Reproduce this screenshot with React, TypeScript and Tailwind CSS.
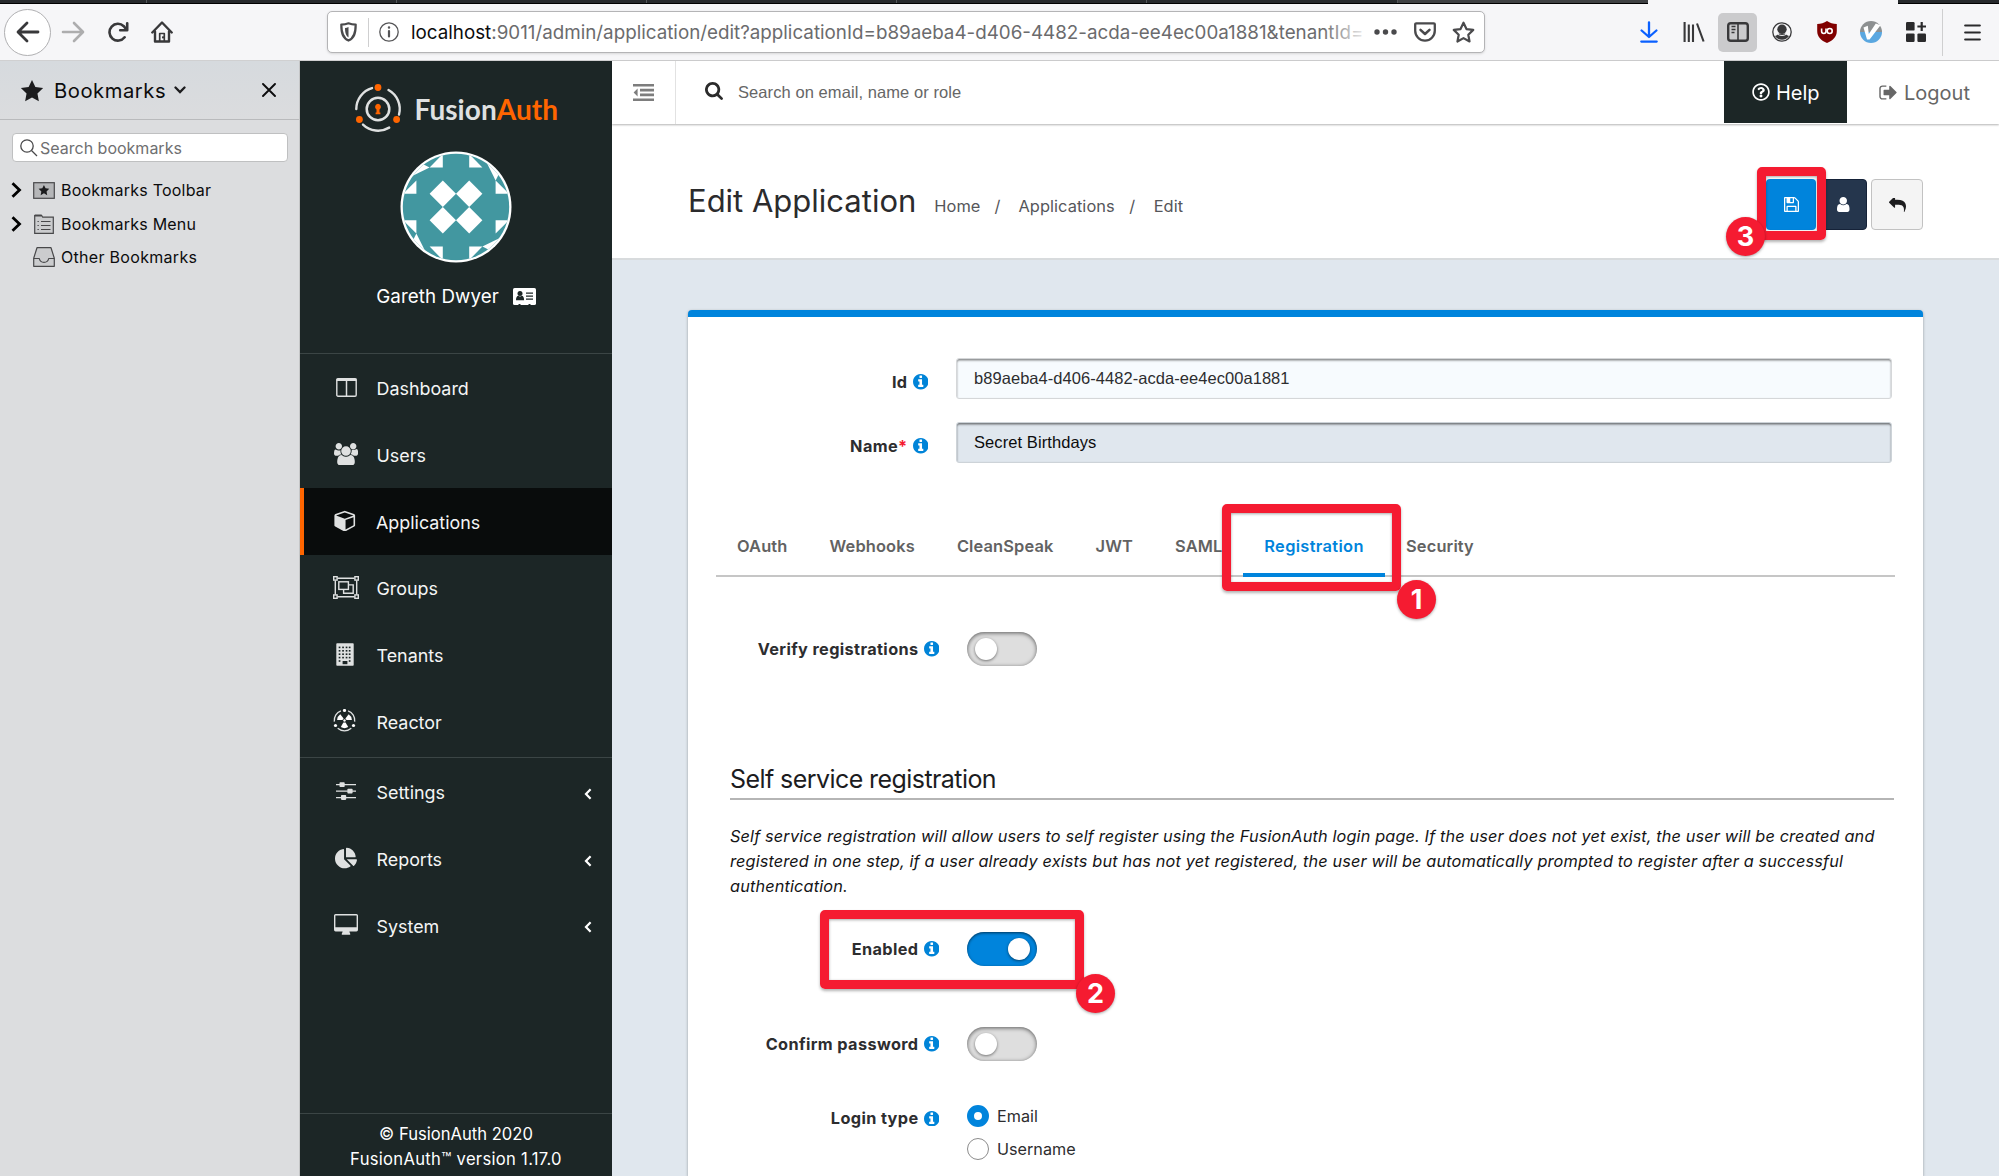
import type { ReactNode } from "react";
import { FaChartPie, FaRegQuestionCircle } from "react-icons/fa";

/* ---------- icons ---------- */

function Glyph({ box, d, className }: { box: string; d: string; className: string }) {
  return (
    <svg viewBox={box} className={className} fill="currentColor">
      <path d={d} />
    </svg>
  );
}

const INFO =
  "M1152 1376v-160q0-14-9-23t-23-9h-96v-512q0-14-9-23t-23-9h-320q-14 0-23 9t-9 23v160q0 14 9 23t23 9h96v320h-96q-14 0-23 9t-9 23v160q0 14 9 23t23 9h448q14 0 23-9t9-23zm-128-896v-160q0-14-9-23t-23-9h-192q-14 0-23 9t-9 23v160q0 14 9 23t23 9h192q14 0 23-9t9-23zm640 416q0 209-103 385.5t-279.5 279.5-385.5 103-385.5-103-279.5-279.5-103-385.5 103-385.5 279.5-279.5 385.5-103 385.5 103 279.5 279.5 103 385.5z";
const SEARCH =
  "M1216 832q0-185-131.5-316.5t-316.5-131.5-316.5 131.5-131.5 316.5 131.5 316.5 316.5 131.5 316.5-131.5 131.5-316.5zm512 832q0 52-38 90t-90 38q-54 0-90-38l-343-342q-179 124-399 124-143 0-273.5-55.5t-225-150-150-225-55.5-273.5 55.5-273.5 150-225 225-150 273.5-55.5 273.5 55.5 225 150 150 225 55.5 273.5q0 220-124 399l343 343q37 37 37 90z";
const SAVE =
  "M512 1536h768v-384h-768v384zm896 0h128v-896q0-14-10-38.5t-20-34.5l-281-281q-10-10-34-20t-39-10v416q0 40-28 68t-68 28h-576q-40 0-68-28t-28-68v-416h-128v1280h128v-416q0-40 28-68t68-28h832q40 0 68 28t28 68v416zm-384-928v-320q0-13-9.5-22.5t-22.5-9.5h-192q-13 0-22.5 9.5t-9.5 22.5v320q0 13 9.5 22.5t22.5 9.5h192q13 0 22.5-9.5t9.5-22.5zm640 32v928q0 40-28 68t-68 28h-1344q-40 0-68-28t-28-68v-1344q0-40 28-68t68-28h928q40 0 88 20t76 48l280 280q28 28 48 76t20 88z";
const USER =
  "M1280 1399q0 109-62.5 187t-150.5 78h-854q-88 0-150.5-78t-62.5-187q0-85 8.5-160.5t31.5-152 58.5-131 94-89 134.5-34.5q131 128 313 128t313-128q76 0 134.5 34.5t94 89 58.5 131 31.5 152 8.5 160.5zm-256-887q0 159-112.5 271.5t-271.5 112.5-271.5-112.5-112.5-271.5 112.5-271.5 271.5-112.5 271.5 112.5 112.5 271.5z";
const REPLY =
  "M1792 1120q0 166-127 451-3 7-10.5 24t-13.5 30-13 22q-12 17-28 17-15 0-23.5-10t-8.5-25q0-9 2.5-26.5t2.5-23.5q5-68 5-123 0-101-17.5-181t-48.5-138.5-80-101-105.5-69.5-133-42.5-154-21.5-175.5-6h-224v256q0 26-19 45t-45 19-45-19l-512-512q-19-19-19-45t19-45l512-512q19-19 45-19t45 19 19 45v256h224q713 0 875 403 53 134 53 333z";
const SIGN_OUT =
  "M640 1440q0 4 1 20t.5 26.5-3 23.5-10 19.5-20.5 6.5h-320q-119 0-203.5-84.5t-84.5-203.5v-704q0-119 84.5-203.5t203.5-84.5h320q13 0 22.5 9.5t9.5 22.5q0 4 1 20t.5 26.5-3 23.5-10 19.5-20.5 6.5h-320q-66 0-113 47t-47 113v704q0 66 47 113t113 47h312l11.5 1 11.5 3 8 5.5 7 9 2 13.5zm928-544q0 26-19 45l-544 544q-19 19-45 19t-45-19-19-45v-288h-448q-26 0-45-19t-19-45v-384q0-26 19-45t45-19h448v-288q0-26 19-45t45-19 45 19l544 544q19 19 19 45z";
const USERS =
  "M593 896q-162 5-265 128h-134q-82 0-138-40.5t-56-118.5q0-353 124-353 6 0 43.5 21t97.5 42.5 119 21.5q67 0 133-23-5 37-5 66 0 159 93 292zm1071 637q0 120-73 189.5t-194 69.5h-874q-121 0-194-69.5t-73-189.5q0-53 3.5-103.5t14-109 26.5-108.5 43-97.5 62-81 85.5-53.5 111.5-20q10 0 43 21.5t73 48 107 48 135 21.5 135-21.5 107-48 73-48 43-21.5q61 0 111.5 20t85.5 53.5 62 81 43 97.5 26.5 108.5 14 109 3.5 103.5zm-1024-1277q0 106-75 181t-181 75-181-75-75-181 75-181 181-75 181 75 75 181zm704 384q0 159-112.5 271.5t-271.5 112.5-271.5-112.5-112.5-271.5 112.5-271.5 271.5-112.5 271.5 112.5 112.5 271.5zm576 225q0 78-56 118.5t-138 40.5h-134q-103-123-265-128 93-133 93-292 0-29-5-66 66 23 133 23 59 0 119-21.5t97.5-42.5 43.5-21q124 0 124 353zm-128-609q0 106-75 181t-181 75-181-75-75-181 75-181 181-75 181 75 75 181z";
const CUBE =
  "M896 1629l640-349v-636l-640 233v752zm-64-865l698-254-698-254-698 254 698 254zm832-252v768q0 35-18 65t-49 47l-704 384q-28 16-61 16t-61-16l-704-384q-31-17-49-47t-18-65v-768q0-40 23-73t61-47l704-256q22-8 44-8t44 8l704 256q38 14 61 47t23 73z";

const STAR = "M12 1.8l3.1 6.6 7.1.9-5.2 5 1.3 7.1L12 17.9l-6.3 3.5L7 14.3l-5.2-5 7.1-.9z";

function ColumnsIcon() {
  return (
    <svg viewBox="0 0 21 19" className="h-[19px] w-[21px]" fill="none" stroke="currentColor">
      <rect x="0.8" y="0.8" width="19.4" height="17.4" rx="1.2" strokeWidth="1.4" />
      <path d="M0.5 1.8h20" strokeWidth="2.4" />
      <path d="M10.5 2v16" strokeWidth="1.5" />
    </svg>
  );
}

function GroupIcon() {
  return (
    <svg viewBox="0 0 26 23" className="h-[23px] w-[26px]" fill="none" stroke="currentColor" strokeWidth="1.4">
      <path d="M4.5 2.3h17M4.5 20.7h17M2.3 4.5v14M23.7 4.5v14" />
      <rect x="0.7" y="0.7" width="3.4" height="3.4" />
      <rect x="21.9" y="0.7" width="3.4" height="3.4" />
      <rect x="0.7" y="18.9" width="3.4" height="3.4" />
      <rect x="21.9" y="18.9" width="3.4" height="3.4" />
      <rect x="5.8" y="5.8" width="9.6" height="7.6" />
      <path d="M15.6 8.9h4.6v8.3H10.6v-3.6" />
    </svg>
  );
}

function BuildingIcon() {
  const rows = [3.6, 7, 10.4, 13.8, 17.2];
  const cols = [3.4, 6.9, 10.4, 13.5];
  return (
    <svg viewBox="0 0 18 23" className="mr-[2px] h-[23px] w-[18px]">
      <rect x="0.3" y="0.2" width="17.4" height="22.6" rx="0.8" fill="currentColor" />
      {rows.map((y, r) =>
        cols.map((x, c) =>
          r === 4 && (c === 1 || c === 2) ? null : (
            <rect key={`${x}-${y}`} x={x - 0.7} y={y} width="1.7" height="1.6" fill="#1c2626" />
          ),
        ),
      )}
      <rect x="6.6" y="18" width="4.8" height="3.2" fill="#1c2626" />
    </svg>
  );
}

function ReactorIcon() {
  return (
    <svg viewBox="-11.5 -11.5 23 23" className="mr-[4px] h-[23px] w-[23px]" fill="none" stroke="currentColor">
      <path d="M-10.2 1.2A10.3 10.3 0 0 1-3.6-9.7M3.6-9.7A10.3 10.3 0 0 1 10.2 1.2M6.8 7.8A10.3 10.3 0 0 1-6.8 7.8" strokeWidth="1.3" />
      <g fill="#fff" stroke="none">
        <circle cx="0" cy="-10" r="1.6" />
        <circle cx="9" cy="5" r="1.6" />
        <circle cx="-9" cy="5" r="1.6" />
        <circle cx="0" cy="0" r="1.2" />
        <path d="M-2-.6L-7.4-.6A7.5 7.5 0 0 1-4.2-6.2L-.9-2.1z" />
        <path d="M2-.6L7.4-.6A7.5 7.5 0 0 0 4.2-6.2L.9-2.1z" />
        <path d="M-1.1 2L-3.7 6.6A7.6 7.6 0 0 0 3.7 6.6L1.1 2z" />
      </g>
    </svg>
  );
}

function SlidersIcon() {
  return (
    <svg viewBox="0 0 20 18" className="h-[18px] w-[20px]" fill="currentColor">
      <path d="M0 2h20v1.3H0zM0 8.5h20v1.3H0zM0 15h20v1.3H0z" />
      <rect x="3.5" y="0.2" width="5.2" height="4.8" rx="0.8" />
      <rect x="11.4" y="6.7" width="5.2" height="4.8" rx="0.8" />
      <rect x="5" y="13.1" width="5.2" height="4.8" rx="0.8" />
    </svg>
  );
}

function DesktopIcon() {
  return (
    <svg viewBox="0 0 24 21" className="h-[21px] w-[24px]" fill="currentColor">
      <path
        fillRule="evenodd"
        d="M1.6 0h20.8A1.6 1.6 0 0 1 24 1.6v14.2a1.6 1.6 0 0 1-1.6 1.6H15.4c0 1.2.8 1.6.8 2.4v1H7.8v-1c0-.8.8-1.2.8-2.4H1.6A1.6 1.6 0 0 1 0 15.8V1.6A1.6 1.6 0 0 1 1.6 0zM1.4 1.4v11.8h21.2V1.4z"
      />
    </svg>
  );
}

function IdCardIcon() {
  return (
    <svg viewBox="0 0 23 17" className="h-[17px] w-[23px]">
      <rect width="23" height="17" rx="1.6" fill="#fff" />
      <g fill="#1c2626">
        <circle cx="7" cy="5.6" r="2.5" />
        <path d="M3 12.3c0-3 1-4.3 2.3-4.5 1 .8 2.5.8 3.5 0 1.3.2 2.3 1.5 2.3 4.5z" />
        <path d="M13 4.5h7v1.3h-7zM13 7.5h7v1.3h-7zM13 10.5h7v1.3h-7zM5.5 16h2v1h-2zM15.5 16h2v1h-2z" />
      </g>
    </svg>
  );
}

function AngleLeft() {
  return (
    <svg viewBox="0 0 8 12" className="h-[12px] w-[8px]" fill="none" stroke="#fff" strokeWidth="2.2">
      <path d="M6.6 1.3L2 6l4.6 4.7" />
    </svg>
  );
}

function LogoMark() {
  return (
    <svg viewBox="-25 -25 50 50" className="h-[50px] w-[50px]" fill="none" stroke="#dfe1e1">
      <path
        d="M-21.7 0A21.7 21.7 0 0 1-6-20.9M10.5-19A21.7 21.7 0 0 1 21 5.6M-15 15.6A21.7 21.7 0 0 0 11.2 18.6"
        strokeWidth="2.4"
        strokeLinecap="round"
      />
      <circle r="11.3" strokeWidth="2.5" />
      <g fill="#ff6500" stroke="none">
        <circle cx="0" cy="-21.5" r="3.4" />
        <circle cx="18.6" cy="10.5" r="3.4" />
        <circle cx="-18.6" cy="10.5" r="3.4" />
        <path d="M0-5.3a3.1 3.1 0 0 1 1.5 5.7V3.4h.9V5.3h-4.8V3.4h.9V.4A3.1 3.1 0 0 1 0-5.3z" />
      </g>
    </svg>
  );
}

function Avatar() {
  return (
    <svg viewBox="-56 -56 112 112" className="h-[112px] w-[112px]">
      <defs>
        <clipPath id="avatar-clip">
          <circle r="53.2" />
        </clipPath>
      </defs>
      <circle r="55.5" fill="#fff" />
      <g clipPath="url(#avatar-clip)">
        <rect x="-56" y="-56" width="112" height="112" fill="#4297a0" />
        {[0, 90, 180, 270].map((a) => (
          <g key={a} fill="#fff" transform={`rotate(${a})`}>
            <path d="M-13.2-26.4L0-13.2-13.2 0-26.4-13.2z" />
            <path d="M-26.4-39.6L-53-26.4V-53z" />
          </g>
        ))}
        <g fill="#fff">
          <path d="M-13.2-53v13.4h-13.2zM13.2-53v13.4h13.2zM-13.2 53V39.6h-13.2zM13.2 53V39.6h13.2z" />
          <path d="M-39.6-26.4v13.2H-53zM39.6-26.4v13.2H53zM-39.6 26.4V13.2H-53zM39.6 26.4V13.2H53z" />
        </g>
      </g>
    </svg>
  );
}

/* ---------- browser chrome ---------- */

function TabStrip() {
  return (
    <div className="flex h-1 shrink-0 bg-[#f6f6f8]">
      <div className="flex w-[1648px] border-b border-black bg-[#26292c]">
        <div className="w-[147px] border-r border-[#55585b]" />
        <div className="w-[250px] border-r border-[#55585b]" />
        <div className="w-[250px] border-r border-[#55585b]" />
        <div className="w-[250px] border-r border-[#55585b]" />
        <div className="w-[250px] border-r border-[#55585b]" />
        <div className="w-[251px] border-r border-[#55585b]" />
        <div className="flex-1 bg-[#3f4143]" />
      </div>
      <div className="w-[250px]" />
      <div className="flex-1 border-b border-black bg-[#26292c]" />
    </div>
  );
}

function Slot({ className = "w-[44.5px]", children }: { className?: string; children: ReactNode }) {
  return <div className={`flex shrink-0 items-center justify-center ${className}`}>{children}</div>;
}

function BrowserBar() {
  return (
    <div className="flex h-[57px] shrink-0 items-center border-b border-[#d0d0d1] bg-[#f6f6f8] text-[#38383a]">
      <div className="flex w-[327px] items-center pl-1">
        <div className="flex size-[47px] items-center justify-center rounded-full border border-[#b0b0b2] bg-white">
          <svg viewBox="0 0 24 22" className="h-[22px] w-[24px]" fill="none" stroke="#38383a" strokeWidth="2.8" strokeLinecap="round" strokeLinejoin="round">
            <path d="M22 11H2.5M11 2L2 11l9 9" />
          </svg>
        </div>
        <Slot>
          <svg viewBox="0 0 24 22" className="h-[22px] w-[24px]" fill="none" stroke="#adadae" strokeWidth="2.6" strokeLinecap="round" strokeLinejoin="round">
            <path d="M2 11h19.5M13 2l9 9-9 9" />
          </svg>
        </Slot>
        <Slot>
          <svg viewBox="0 0 22 20" className="h-[20px] w-[22px]" fill="none" stroke="#38383a" strokeWidth="2.6" strokeLinecap="round">
            <path d="M17.6 15.3A8.4 8.4 0 1 1 16.8 4.2l1.8 2.3" />
            <path d="M20.2 1.3v7h-7" strokeLinejoin="round" />
          </svg>
        </Slot>
        <Slot>
          <svg viewBox="0 0 22 22" className="h-[22px] w-[22px]" fill="none" stroke="#38383a" strokeWidth="2.4" strokeLinejoin="round" strokeLinecap="round">
            <path d="M1.3 11.5L11 1.5l9.7 10" />
            <path d="M4 10.5v10h14v-10" />
            <path d="M8.7 20v-7.5h4.6V20M11.8 16v.6" strokeWidth="1.7" />
          </svg>
        </Slot>
      </div>
      <div className="flex h-[42px] w-[1158px] items-center rounded-[5px] border-[1.5px] border-[#b4b4b6] bg-white shadow-sm">
        <Slot className="w-[40px]">
          <svg viewBox="0 0 17 20" className="h-[20px] w-[17px]" fill="none" stroke="#4a4a4c">
            <path d="M8.5 1.3C6 2.3 3.5 2.6 1.3 2.6c0 8.4 1.4 13.6 7.2 16 5.8-2.4 7.2-7.6 7.2-16-2.2 0-4.7-.3-7.2-1.3z" strokeWidth="2.2" strokeLinejoin="round" />
            <path d="M8.5 5v10.5C6 13.7 5 11 5 6c1.2 0 2.4-.4 3.5-1z" fill="#4a4a4c" stroke="none" />
          </svg>
        </Slot>
        <div className="h-[29px] w-px bg-[#cfcfd0]" />
        <Slot className="w-[39px]">
          <svg viewBox="0 0 20 20" className="size-[20px]" fill="none" stroke="#555557">
            <circle cx="10" cy="10" r="9.2" strokeWidth="1.3" />
            <path d="M10 9v5.5" strokeWidth="2.2" strokeLinecap="round" />
            <circle cx="10" cy="5.6" r="0.7" strokeWidth="1.1" />
          </svg>
        </Slot>
        <div className="relative w-[958px] shrink-0 overflow-hidden pt-[2px] pl-[3px] text-[18.8px] whitespace-nowrap text-[#6b6b6d]">
          <span>
            <span className="text-[#0c0c0d]">localhost</span>
            :9011/admin/application/edit?applicationId=b89aeba4-d406-4482-acda-ee4ec00a1881&amp;tenantId=
          </span>
          <div className="absolute inset-y-0 right-0 w-[44px] bg-linear-to-r from-white/0 to-white/90" />
        </div>
        <Slot className="w-[39px]">
          <svg viewBox="0 0 23 6" className="h-[6px] w-[23px]" fill="#4a4a4c">
            <circle cx="3" cy="3" r="2.7" />
            <circle cx="11.5" cy="3" r="2.7" />
            <circle cx="20" cy="3" r="2.7" />
          </svg>
        </Slot>
        <Slot className="w-[39px]">
          <svg viewBox="0 0 22 20" className="h-[20px] w-[22px]" fill="none" stroke="#4a4a4c" strokeWidth="2.3" strokeLinecap="round" strokeLinejoin="round">
            <path d="M2.2 1.3h17.6a1 1 0 0 1 1 1v6.5a9.8 9.8 0 0 1-19.6 0V2.3a1 1 0 0 1 1-1z" />
            <path d="M6.5 7.8l4.5 4.2 4.5-4.2" strokeWidth="2.5" />
          </svg>
        </Slot>
        <Slot className="w-[39px]">
          <svg viewBox="0 0 24 24" className="size-[23px]" fill="none" stroke="#4a4a4c" strokeWidth="2.3" strokeLinejoin="round">
            <path d={STAR} />
          </svg>
        </Slot>
      </div>
      <div className="ml-auto flex h-full items-center">
        <Slot>
          <svg viewBox="0 0 18 22" className="h-[22px] w-[18px]" fill="none" stroke="#0a60ff" strokeWidth="2.3" strokeLinecap="round" strokeLinejoin="round">
            <path d="M9 1.3v14M1.6 9.5L9 16l7.4-6.5M1.3 20.6h15.4" />
          </svg>
        </Slot>
        <Slot>
          <svg viewBox="0 0 22 20" className="ml-[1px] h-[20px] w-[22px]" fill="none" stroke="#38383a" strokeWidth="2.1">
            <path d="M1.6 0v20M5.8 2.5V20M10 2.5V20M14 1.5l6.6 18" />
          </svg>
        </Slot>
        <Slot>
          <div className="flex h-[39px] w-[39px] items-center justify-center rounded-[5px] bg-[#cbcbcd]">
            <svg viewBox="0 0 22 20" className="h-[20px] w-[22px]" fill="none" stroke="#38383a">
              <rect x="1.2" y="1.2" width="19.6" height="17.6" rx="2.6" strokeWidth="2.4" />
              <path d="M11 2v16" strokeWidth="1.6" />
              <path d="M4.5 4.5h4M4.5 7.5h4M4.5 10.5h3" strokeWidth="1.4" />
            </svg>
          </div>
        </Slot>
        <Slot>
          <svg viewBox="0 0 20 20" className="size-[20px]" fill="none" stroke="#38383a">
            <circle cx="10" cy="10" r="9.2" strokeWidth="1.3" />
            <circle cx="10" cy="7.3" r="4.7" fill="#38383a" stroke="none" />
            <path d="M3 14c2-.8 3-1.5 4-2.5h6c1 1 2 1.7 4 2.5-1.5 2.2-4 3.7-7 3.7S4.5 16.2 3 14z" fill="#38383a" stroke="none" />
            <path d="M5.5 12.2c2.8 1.7 6.2 1.7 9 0" stroke="#f6f6f8" strokeWidth="1" />
          </svg>
        </Slot>
        <Slot>
          <svg viewBox="0 0 20 22" className="h-[22px] w-[20px]">
            <path d="M10 0c3 2 6 3 9.8 3.1V10c0 6-4 9.5-9.8 12C4.2 19.5.2 16 .2 10V3.1C4 3 7 2 10 0z" fill="#800000" />
            <path d="M4.6 7.4v2.9a2.2 2.2 0 0 0 4.4 0V7.4" fill="none" stroke="#fff" strokeWidth="1.6" />
            <circle cx="12.7" cy="10" r="2.5" fill="none" stroke="#fff" strokeWidth="1.6" />
          </svg>
        </Slot>
        <Slot>
          <svg viewBox="0 0 22 22" className="size-[22px]">
            <path d="M0 11a11 11 0 0 1 22 0z" fill="#8d9091" />
            <path d="M0 11a11 11 0 0 0 22 0z" fill="#5aa7e0" />
            <path d="M3.5 6.5l4.3-1.7 1 8.2 7-10.5 4.7 1.8L9.6 18.5H7z" fill="#fff" />
          </svg>
        </Slot>
        <Slot>
          <svg viewBox="0 0 20 20" className="size-[20px]" fill="#2a2a2c">
            <rect width="8.6" height="8.6" rx="1.2" />
            <rect y="11.4" width="8.6" height="8.6" rx="1.2" />
            <rect x="11.4" y="11.4" width="8.6" height="8.6" rx="1.2" />
            <path d="M14.6 0h2.2v3.4h3.2v2.2h-3.2V9h-2.2V5.6h-3.2V3.4h3.2z" />
          </svg>
        </Slot>
        <div className="ml-[4px] h-[47px] w-px bg-[#cfcfd0]" />
        <Slot className="w-[56px] pl-[3px]">
          <svg viewBox="0 0 17 17" className="size-[17px]" fill="none" stroke="#2a2a2c" strokeWidth="2.2" strokeLinecap="round">
            <path d="M1.2 1.5h14.6M1.2 8.5h14.6M1.2 15.5h14.6" />
          </svg>
        </Slot>
      </div>
    </div>
  );
}

function BookmarksPanel() {
  const chevron = (
    <svg viewBox="0 0 11 16" className="h-[16px] w-[11px]" fill="none" stroke="#000" strokeWidth="2.8">
      <path d="M1.5 1.3L8.5 8l-7 6.7" />
    </svg>
  );
  return (
    <div className="flex w-[300px] shrink-0 flex-col border-r border-[#c4c5c6] bg-[#dcdddf] text-[#0c0c0d]">
      <div className="flex h-[59px] items-center border-b border-[#b9babc] bg-linear-to-b from-[#d6dade] to-[#dbdcde] pl-[20px]">
        <Glyph box="1 1 22 21" d={STAR} className="h-[23px] w-[24px] text-[#1c1c1e]" />
        <span className="ml-[10px] pt-[3px] text-[20.2px] tracking-[0.55px]">Bookmarks</span>
        <svg viewBox="0 0 12 8" className="ml-[8px] h-[8px] w-[12px]" fill="none" stroke="#1c1c1e" strokeWidth="2.3" strokeLinecap="round">
          <path d="M1.5 1.5L6 6l4.5-4.5" />
        </svg>
        <svg viewBox="0 0 14 14" className="mr-[23px] ml-auto h-[14px] w-[14px]" fill="none" stroke="#0c0c0d" strokeWidth="1.9" strokeLinecap="round">
          <path d="M1 1l12 12M13 1L1 13" />
        </svg>
      </div>
      <div className="mx-[12px] mt-[13px] flex h-[29px] w-[276px] items-center rounded-[4px] border border-[#bfc0c1] bg-white pl-[7px]">
        <svg viewBox="0 0 18 18" className="h-[18px] w-[18px]" fill="none" stroke="#48484a" strokeWidth="1.3">
          <circle cx="7" cy="7" r="6.2" />
          <path d="M11.5 11.5l5.5 5.5" />
        </svg>
        <span className="ml-[2px] text-[16px] text-[#6f6f71]">Search bookmarks</span>
      </div>
      <div className="mt-[11.5px] flex flex-col text-[16px] tracking-[0.22px]">
        <div className="flex h-[33.4px] items-center pl-[11px]">
          {chevron}
          <svg viewBox="0 0 22 17" className="ml-[11px] h-[17px] w-[22px]">
            <rect x="0.7" y="0.7" width="20.6" height="15.6" fill="#b5b6b8" stroke="#48484a" strokeWidth="1.2" />
            <path d={STAR} fill="#1c1c1e" transform="translate(4.7 2) scale(.52)" />
          </svg>
          <span className="ml-[6px]">Bookmarks Toolbar</span>
        </div>
        <div className="flex h-[33.4px] items-center pl-[11px]">
          {chevron}
          <svg viewBox="0 0 20 20" className="mr-px ml-[12px] h-[20px] w-[20px]" fill="none" stroke="#48484a" strokeWidth="1.2">
            <path d="M0.7 19.3V1.5h7l1 1.7h10.6v16.1z" fill="#cbccce" />
            <path d="M0.7 1.5h7" strokeWidth="2" />
            <path d="M3.5 7.5h1.3M3.5 11.5h1.3M3.5 15.5h1.3M7 7.5h9.5M7 11.5h9.5M7 15.5h9.5" />
          </svg>
          <span className="ml-[6px]">Bookmarks Menu</span>
        </div>
        <div className="flex h-[33.4px] items-center pl-[33px]">
          <svg viewBox="0 0 22 20" className="h-[20px] w-[22px]" fill="none" stroke="#48484a" strokeWidth="1.2" strokeLinejoin="round">
            <path d="M4 0.7h14l3.3 10.5v8.1H0.7v-8.1z" fill="#cbccce" />
            <path d="M0.7 11.5h5.6a4.8 4.8 0 0 0 9.4 0h5.6" />
          </svg>
          <span className="ml-[6px] tracking-[0.3px]">Other Bookmarks</span>
        </div>
      </div>
    </div>
  );
}

/* ---------- admin navigation ---------- */

function NavItem({ icon, label, active, expandable }: { icon: ReactNode; label: string; active?: boolean; expandable?: boolean }) {
  return (
    <div
      className={
        active
          ? "flex h-[66.7px] items-center border-l-[4.5px] border-[#ff6500] bg-[#090c0c] pr-[20px] pl-[26.5px]"
          : "flex h-[66.7px] items-center pr-[20px] pl-[31px]"
      }
    >
      <div className="flex w-[30px] justify-center pb-[1px] text-[#dfe1e1]">{icon}</div>
      <span className="ml-[15.5px] pt-[4px] text-[17.9px] text-[#f4f5f5]">{label}</span>
      {expandable && (
        <span className="ml-auto pt-[4px]">
          <AngleLeft />
        </span>
      )}
    </div>
  );
}

function AdminNav() {
  return (
    <div className="flex w-[312px] shrink-0 flex-col bg-[#1c2626] text-white">
      <div className="flex h-[292.5px] flex-col items-center border-b border-[#3b4545]">
        <div className="mt-[23px] flex w-full items-center pl-[53px]">
          <LogoMark />
          <span className="ml-[11.5px] font-[Lato] text-[28px] font-bold tracking-[0.05px] text-[#dfe1e1]">
            Fusion<span className="text-[#ff6500]">Auth</span>
          </span>
        </div>
        <div className="mt-[16.5px]">
          <Avatar />
        </div>
        <div className="mt-[20px] flex items-center text-[18.8px]">
          <span className="tracking-[0.05px]">Gareth Dwyer</span>
          <span className="ml-[14px]">
            <IdCardIcon />
          </span>
        </div>
      </div>
      <div className="flex h-[404px] flex-col border-b border-[#3b4545] pt-[1px]">
        <NavItem icon={<ColumnsIcon />} label="Dashboard" />
        <NavItem icon={<Glyph box="0 0 1920 1792" d={USERS} className="h-[22.5px] w-[24px]" />} label="Users" />
        <NavItem icon={<Glyph box="0 64 1664 1728" d={CUBE} className="mr-px h-[21.5px] w-[21.5px]" />} label="Applications" active />
        <NavItem icon={<GroupIcon />} label="Groups" />
        <NavItem icon={<BuildingIcon />} label="Tenants" />
        <NavItem icon={<ReactorIcon />} label="Reactor" />
      </div>
      <div className="flex flex-col pt-[1px]">
        <NavItem icon={<SlidersIcon />} label="Settings" expandable />
        <NavItem icon={<FaChartPie className="size-[22px]" />} label="Reports" expandable />
        <NavItem icon={<DesktopIcon />} label="System" expandable />
      </div>
      <div className="mt-auto h-[63px] border-t border-[#3b4545] pt-[8px] text-center leading-[25px]">
        <div className="text-[16.6px]">© FusionAuth 2020</div>
        <div className="text-[16.6px] tracking-[0.3px]">FusionAuth™ version 1.17.0</div>
      </div>
    </div>
  );
}

/* ---------- callouts ---------- */

function Callout({ n, box, badge }: { n: number; box: string; badge: string }) {
  return (
    <>
      <div
        className={`absolute z-10 rounded-[5px] border-[9.5px] border-[#f51b31] shadow-[0_2px_3px_rgba(0,0,0,0.3),inset_0_1px_3px_rgba(0,0,0,0.35)] ${box}`}
      />
      <div
        className={`absolute z-20 flex size-[39px] items-center justify-center rounded-full bg-[#f51b31] text-[27px] leading-none font-bold tracking-normal text-white shadow-[0_1px_3px_rgba(0,0,0,0.35)] ${badge}`}
      >
        {n}
      </div>
    </>
  );
}

/* ---------- form parts ---------- */

function Label({ children, required, className }: { children: ReactNode; required?: boolean; className: string }) {
  return (
    <div className={`flex shrink-0 items-center justify-end text-[16.3px] font-bold tracking-[0.37px] text-[#2d2d2f] ${className}`}>
      <span>
        {children}
        {required && <span className="text-[#f51b31]">*</span>}
      </span>
      <Glyph box="128 128 1536 1536" d={INFO} className="ml-[5px] size-[15.5px] text-[#0084d8]" />
    </div>
  );
}

function Toggle({ on }: { on?: boolean }) {
  return (
    <div
      className={
        on
          ? "flex h-[34px] w-[70px] items-center justify-end rounded-full bg-[#0084dc] px-[7px] shadow-[inset_0_1px_3px_rgba(0,0,0,0.6)]"
          : "flex h-[34px] w-[70px] items-center rounded-full bg-[#dedede] px-[8px] shadow-[inset_0_1px_4px_rgba(0,0,0,0.6)]"
      }
    >
      <div className="size-[22px] rounded-full bg-white shadow-[0_1px_3px_rgba(0,0,0,0.5)]" />
    </div>
  );
}

function Tab({ children }: { children: ReactNode }) {
  return <div className="px-[21px]">{children}</div>;
}

function TopBar() {
  return (
    <div className="z-10 flex h-[63px] shrink-0 items-stretch bg-white shadow-[0_1px_2px_rgba(0,0,0,0.3)]">
      <div className="flex w-[64px] items-center justify-center border-r border-[#e2e2e2] text-[#7d7d7d]">
        <svg viewBox="0 0 21 17" className="h-[17px] w-[21px]" fill="currentColor">
          <path d="M0 0h21v2.6H0zM7 4.8h14v2.6H7zM7 9.6h14v2.6H7zM0 14.4h21V17H0zM4.6 4.6v7.8L.6 8.5z" />
        </svg>
      </div>
      <div className="flex items-center pl-[29px]">
        <Glyph box="64 128 1664 1664" d={SEARCH} className="mb-[4px] size-[18px] text-[#2b2b2b]" />
        <span className="ml-[15px] font-['Liberation_Sans'] text-[16.5px] tracking-[0.08px] text-[#666]">Search on email, name or role</span>
      </div>
      <div className="ml-auto flex h-[62px] w-[123px] items-center bg-[#1c2626] pl-[28px] text-[20px] text-white">
        <FaRegQuestionCircle className="size-[18px]" />
        <span className="ml-[6px] pt-[2px]">Help</span>
      </div>
      <div className="flex h-[62px] w-[152px] items-center pl-[32px] text-[20px] text-[#666]">
        <Glyph box="0 128 1664 1536" d={SIGN_OUT} className="h-[17px] w-[19px]" />
        <span className="ml-[6px] pt-[2px]">Logout</span>
      </div>
    </div>
  );
}

function PageHeader() {
  return (
    <div className="flex h-[136px] shrink-0 border-b-2 border-[#d8dbdd] bg-white pr-[76px] pl-[76px]">
      <div className="flex items-baseline pt-[54px] text-[#2b2b2d]">
        <h1 className="text-[31px] leading-[46px]">Edit Application</h1>
        <div className="ml-[18px] flex text-[16.4px] tracking-[0.06px] text-[#55565a]">
          <span>Home</span>
          <span className="ml-[14px]">/</span>
          <span className="ml-[18px]">Applications</span>
          <span className="ml-[14.5px]">/</span>
          <span className="ml-[18.5px]">Edit</span>
        </div>
      </div>
      <div className="relative mt-[55px] ml-auto flex h-[51px] gap-[4px]">
        <div className="flex w-[50px] items-center justify-center rounded-[4px] bg-[#0084dc] text-white">
          <Glyph box="128 128 1536 1536" d={SAVE} className="size-[15px]" />
        </div>
        <div className="flex w-[47px] items-center justify-center rounded-[4px] border border-[#152238] bg-[#25364d] text-white">
          <Glyph box="0 128 1280 1536" d={USER} className="h-[15px] w-[12.5px]" />
        </div>
        <div className="flex w-[52px] items-center justify-center rounded-[4px] border-[1.5px] border-[#c2c2c2] bg-[#f4f4f4] text-[#1c1c1e]">
          <Glyph box="0 192 1792 1472" d={REPLY} className="h-[14px] w-[17px]" />
        </div>
        <Callout n={3} box="-top-[12px] -left-[9px] h-[73px] w-[69px]" badge="top-[38px] -left-[40px]" />
      </div>
    </div>
  );
}

function FormCard() {
  return (
    <div className="relative mx-[76px] mt-[50px] flex flex-1 flex-col rounded-t-[4px] border-t-[7px] border-[#0084dc] bg-white shadow-[0_1px_3px_rgba(0,0,0,0.35)]">
      <div className="mt-[41px] flex h-[41px] items-start">
        <Label className="h-[48px] w-[240px]">Id</Label>
        <div className="ml-[28px] flex h-[41px] w-[936px] items-center rounded-[3px] border border-[#d5d7d9] bg-[#f7fbfe] pb-[1px] pl-[17px] font-['Liberation_Sans'] text-[16.5px] tracking-[0.05px] text-[#2d2d2f] shadow-[inset_0_1.5px_2px_rgba(0,0,0,0.45)]">
          b89aeba4-d406-4482-acda-ee4ec00a1881
        </div>
      </div>
      <div className="mt-[23px] flex h-[41px] items-start">
        <Label className="h-[48px] w-[240px]" required>
          Name
        </Label>
        <div className="ml-[28px] flex h-[41px] w-[936px] items-center rounded-[3px] border border-[#cdd3d8] bg-[#e0e7ee] pb-[1px] pl-[17px] font-['Liberation_Sans'] text-[16.5px] tracking-[0.08px] text-[#0c0c0d] shadow-[inset_0_1.5px_2px_rgba(0,0,0,0.5)]">
          Secret Birthdays
        </div>
      </div>

      <div className="mx-[28px] mt-[54px] flex h-[60px] border-b-2 border-[#c6c6c6] text-[16.4px] leading-[58px] font-semibold tracking-[0.15px] text-[#626262]">
        <Tab>OAuth</Tab>
        <Tab>Webhooks</Tab>
        <Tab>CleanSpeak</Tab>
        <Tab>JWT</Tab>
        <div className="w-[89px] pl-[21px]">SAML</div>
        <div className="relative h-[60px] w-[142px] border-b-4 border-[#0084dc] text-center tracking-[0.35px] text-[#0084dc]">
          Registration
          <Callout n={1} box="-top-[13px] -left-[21px] h-[87px] w-[179px]" badge="top-[63px] left-[154px]" />
        </div>
        <Tab>Security</Tab>
      </div>

      <div className="mt-[55px] flex h-[34px] items-center">
        <Label className="w-[251px]">Verify registrations</Label>
        <div className="ml-[28px]">
          <Toggle />
        </div>
      </div>

      <h2 className="mr-[29px] ml-[42px] mt-[94px] h-[40px] border-b-2 border-[#b5b5b5] text-[25px] leading-[38px] tracking-[-0.57px] text-[#1c1c1e]">
        Self service registration
      </h2>
      <p className="mt-[24px] ml-[42px] text-[16.3px] leading-[25px] tracking-[0.145px] whitespace-nowrap text-[#141416] italic">
        Self service registration will allow users to self register using the FusionAuth login page. If the user does not yet exist, the user will be created and
        <br />
        registered in one step, if a user already exists but has not yet registered, the user will be automatically prompted to register after a successful
        <br />
        authentication.
      </p>

      <div className="relative mt-[33px] flex h-[34px] items-center">
        <Label className="w-[251px]">Enabled</Label>
        <div className="ml-[28px]">
          <Toggle on />
        </div>
        <Callout n={2} box="-top-[22px] left-[132px] h-[79px] w-[264px]" badge="top-[42px] left-[388px]" />
      </div>

      <div className="mt-[61px] flex h-[34px] items-center">
        <Label className="w-[251px]">Confirm password</Label>
        <div className="ml-[28px]">
          <Toggle />
        </div>
      </div>

      <div className="mt-[38px] flex">
        <Label className="h-[39px] w-[251px]">Login type</Label>
        <div className="ml-[28px] flex flex-col text-[16.2px] text-[#2d2d2f]">
          <div className="flex h-[33px] items-center">
            <div className="size-[22px] rounded-full border-[7px] border-[#0084dc] bg-white" />
            <span className="ml-[8px] pt-[1px]">Email</span>
          </div>
          <div className="flex h-[33px] items-center">
            <div className="size-[22px] rounded-full border border-[#8c8c8c] bg-white" />
            <span className="ml-[8px] pt-[1px]">Username</span>
          </div>
        </div>
      </div>
    </div>
  );
}

export default function App() {
  return (
    <div className="flex h-[1176px] w-[1999px] flex-col overflow-hidden font-[Inter,sans-serif]">
      <TabStrip />
      <BrowserBar />
      <div className="flex min-h-0 flex-1">
        <BookmarksPanel />
        <AdminNav />
        <div className="flex min-w-0 flex-1 flex-col bg-[#e0e7ee]">
          <TopBar />
          <PageHeader />
          <FormCard />
        </div>
      </div>
    </div>
  );
}
